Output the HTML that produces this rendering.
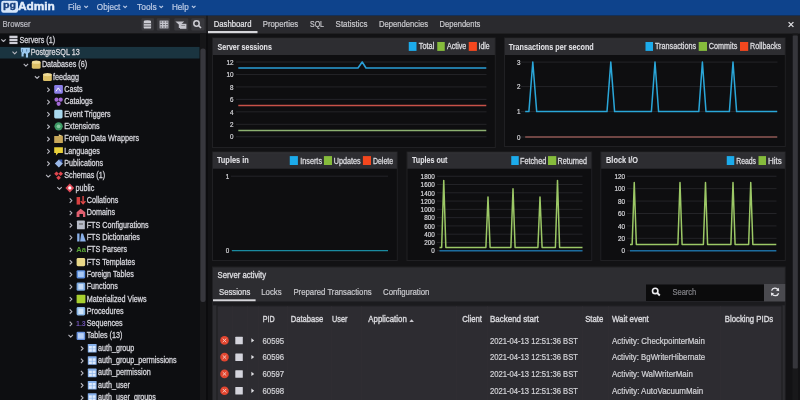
<!DOCTYPE html><html><head><meta charset="utf-8"><style>html,body{margin:0;padding:0;background:#131315;width:800px;height:400px;overflow:hidden}svg{display:block;will-change:transform}text{font-family:"Liberation Sans",sans-serif}</style></head><body>
<svg width="800" height="400" viewBox="0 0 800 400">
<rect x="0.00" y="0.00" width="800.00" height="400.00" fill="#121214" />
<rect x="0.00" y="0.00" width="800.00" height="15.70" fill="#0e438c" />
<rect x="1.2" y="0.7" width="16.8" height="12.1" rx="2.2" fill="#d6e6fa"/>
<text x="3.10" y="8.00" font-size="9.8" fill="#1a4280" font-weight="bold" text-anchor="start" textLength="13.0" lengthAdjust="spacingAndGlyphs" stroke="#1a4280" stroke-width="0.35">pg</text>
<text x="17.90" y="9.70" font-size="10.6" fill="#e4eefb" font-weight="bold" text-anchor="start" textLength="37.0" lengthAdjust="spacingAndGlyphs" stroke="#e4eefb" stroke-width="0.45">Admin</text>
<text x="67.90" y="9.70" font-size="8.6" fill="#bccbe6" font-weight="normal" text-anchor="start" textLength="13.1" lengthAdjust="spacingAndGlyphs" stroke="#bccbe6" stroke-width="0.22">File</text>
<polyline points="84.30,5.90 86.10,7.70 87.90,5.90" fill="none" stroke="#bccbe6" stroke-width="1.2" stroke-linejoin="round" />
<text x="96.80" y="9.70" font-size="8.6" fill="#bccbe6" font-weight="normal" text-anchor="start" textLength="23.6" lengthAdjust="spacingAndGlyphs" stroke="#bccbe6" stroke-width="0.22">Object</text>
<polyline points="123.30,5.90 125.10,7.70 126.90,5.90" fill="none" stroke="#bccbe6" stroke-width="1.2" stroke-linejoin="round" />
<text x="137.00" y="9.70" font-size="8.6" fill="#bccbe6" font-weight="normal" text-anchor="start" textLength="19.7" lengthAdjust="spacingAndGlyphs" stroke="#bccbe6" stroke-width="0.22">Tools</text>
<polyline points="159.40,5.90 161.20,7.70 163.00,5.90" fill="none" stroke="#bccbe6" stroke-width="1.2" stroke-linejoin="round" />
<text x="172.00" y="9.70" font-size="8.6" fill="#bccbe6" font-weight="normal" text-anchor="start" textLength="16.7" lengthAdjust="spacingAndGlyphs" stroke="#bccbe6" stroke-width="0.22">Help</text>
<polyline points="191.90,5.90 193.70,7.70 195.50,5.90" fill="none" stroke="#bccbe6" stroke-width="1.2" stroke-linejoin="round" />
<rect x="0.00" y="15.70" width="206.00" height="17.90" fill="#2a2a2e" />
<rect x="208.00" y="15.70" width="592.00" height="17.90" fill="#2a2a2e" />
<rect x="206.00" y="15.70" width="2.00" height="17.90" fill="#1c1c1f" />
<text x="2.50" y="26.80" font-size="8.3" fill="#b9b9c0" font-weight="normal" text-anchor="start" textLength="28.1" lengthAdjust="spacingAndGlyphs" stroke="#b9b9c0" stroke-width="0.22">Browser</text>
<rect x="141.5" y="18.3" width="12.5" height="12.1" rx="1" fill="#38383d"/>
<rect x="156.8" y="18.3" width="13.1" height="12.1" rx="1" fill="#38383d"/>
<rect x="174.3" y="18.3" width="14" height="12.1" rx="1" fill="#38383d"/>
<rect x="191.3" y="18.3" width="13.2" height="12.1" rx="1" fill="#38383d"/>
<g fill="#cdcdd4"><ellipse cx="147.4" cy="21.6" rx="3.7" ry="1.3"/><rect x="143.7" y="21.6" width="7.4" height="7" rx="1.2"/></g><g stroke="#3a3a3f" stroke-width="0.7"><line x1="143.7" y1="23.6" x2="151.1" y2="23.6"/><line x1="143.7" y1="26.1" x2="151.1" y2="26.1"/></g>
<rect x="159.6" y="20.6" width="8.8" height="7.8" fill="#c4c4cc"/><g fill="#2a2a2e"><rect x="160.6" y="21.5" width="1.1" height="1.1"/><rect x="160.6" y="24.0" width="1.1" height="1.1"/><rect x="160.6" y="26.5" width="1.1" height="1.1"/><rect x="163.5" y="21.5" width="1.1" height="1.1"/><rect x="163.5" y="24.0" width="1.1" height="1.1"/><rect x="163.5" y="26.5" width="1.1" height="1.1"/><rect x="166.4" y="21.5" width="1.1" height="1.1"/><rect x="166.4" y="24.0" width="1.1" height="1.1"/><rect x="166.4" y="26.5" width="1.1" height="1.1"/></g>
<g fill="#c4c4cc"><polygon points="175.4,21.6 184.2,21.6 181,24.6 181,28 178.8,28 178.8,24.6"/><rect x="180" y="23.8" width="6.4" height="5" /></g><rect x="181.3" y="25" width="3.8" height="1" fill="#8a8a90"/>
<circle cx="196.5" cy="23.5" r="2.7" fill="none" stroke="#cdcdd4" stroke-width="1.5"/><line x1="198.5" y1="25.5" x2="201" y2="28" stroke="#cdcdd4" stroke-width="1.6"/>
<text x="213.75" y="27.20" font-size="8.4" fill="#e4e4e8" font-weight="normal" text-anchor="start" textLength="37.7" lengthAdjust="spacingAndGlyphs" stroke="#e4e4e8" stroke-width="0.22">Dashboard</text>
<text x="262.75" y="27.20" font-size="8.4" fill="#c8c8cc" font-weight="normal" text-anchor="start" textLength="35.4" lengthAdjust="spacingAndGlyphs" stroke="#c8c8cc" stroke-width="0.22">Properties</text>
<text x="310.00" y="27.20" font-size="8.4" fill="#c8c8cc" font-weight="normal" text-anchor="start" textLength="14.0" lengthAdjust="spacingAndGlyphs" stroke="#c8c8cc" stroke-width="0.22">SQL</text>
<text x="335.60" y="27.20" font-size="8.4" fill="#c8c8cc" font-weight="normal" text-anchor="start" textLength="31.8" lengthAdjust="spacingAndGlyphs" stroke="#c8c8cc" stroke-width="0.22">Statistics</text>
<text x="379.00" y="27.20" font-size="8.4" fill="#c8c8cc" font-weight="normal" text-anchor="start" textLength="49.0" lengthAdjust="spacingAndGlyphs" stroke="#c8c8cc" stroke-width="0.22">Dependencies</text>
<text x="439.60" y="27.20" font-size="8.4" fill="#c8c8cc" font-weight="normal" text-anchor="start" textLength="40.8" lengthAdjust="spacingAndGlyphs" stroke="#c8c8cc" stroke-width="0.22">Dependents</text>
<rect x="208.00" y="31.00" width="49.50" height="2.20" fill="#d6d6da" />
<g stroke="#e0e0e4" stroke-width="1.3"><line x1="788.6" y1="22.1" x2="793.4" y2="26.9"/><line x1="793.4" y1="22.1" x2="788.6" y2="26.9"/></g>
<rect x="0.00" y="33.60" width="206.00" height="366.40" fill="#0d0e11" />
<rect x="200.00" y="33.60" width="6.00" height="366.40" fill="#161618" />
<rect x="200.40" y="48.50" width="5.20" height="253.50" fill="#37373d" rx="2.2"/>
<rect x="206.00" y="33.60" width="2.00" height="366.40" fill="#0c0c0e" />
<rect x="0.00" y="46.92" width="199.50" height="11.60" fill="#1a3440" />
<polyline points="1.30,39.30 3.50,41.50 5.70,39.30" fill="none" stroke="#b8b8c0" stroke-width="1.1" stroke-linejoin="round" />
<g transform="translate(13.75,39.90) scale(1.16) translate(-13.75,-39.90)">
<g fill="#cfcfd8"><rect x="10.0" y="36.3" width="7" height="2" /><rect x="10.0" y="38.9" width="7" height="2"/><rect x="10.0" y="41.5" width="7" height="2"/></g>
</g>
<text x="19.50" y="42.80" font-size="9.0" fill="#d6d6dc" font-weight="normal" text-anchor="start" textLength="35.6" lengthAdjust="spacingAndGlyphs" stroke="#d6d6dc" stroke-width="0.3">Servers (1)</text>
<polyline points="12.50,51.62 14.70,53.82 16.90,51.62" fill="none" stroke="#b8b8c0" stroke-width="1.1" stroke-linejoin="round" />
<g transform="translate(24.95,52.22) scale(1.16) translate(-24.95,-52.22)">
<path d="M21.4,48.419999999999995 h7.8 v3.6 l-1.6,1.2 v3.6 h-1.8 v-3 l-1,-1 l-1,1 v2 h-1.8 v-3.4 l-0.6,-1 z" fill="#9ccaf0"/><path d="M22.8,49.519999999999996 v2.6 M26.4,49.519999999999996 v2.2" stroke="#3a6a90" stroke-width="0.6"/>
</g>
<text x="30.70" y="55.12" font-size="9.0" fill="#d6d6dc" font-weight="normal" text-anchor="start" textLength="49.0" lengthAdjust="spacingAndGlyphs" stroke="#d6d6dc" stroke-width="0.3">PostgreSQL 13</text>
<polyline points="23.70,63.94 25.90,66.14 28.10,63.94" fill="none" stroke="#b8b8c0" stroke-width="1.1" stroke-linejoin="round" />
<g transform="translate(36.15,64.54) scale(1.16) translate(-36.15,-64.54)">
<rect x="32.4" y="62.14000000000001" width="7.6" height="6" rx="1.2" fill="#dcc068"/><ellipse cx="36.199999999999996" cy="62.540000000000006" rx="3.8" ry="1.4" fill="#f0dc98"/>
</g>
<text x="41.90" y="67.44" font-size="9.0" fill="#d6d6dc" font-weight="normal" text-anchor="start" textLength="45.2" lengthAdjust="spacingAndGlyphs" stroke="#d6d6dc" stroke-width="0.3">Databases (6)</text>
<polyline points="34.90,76.26 37.10,78.46 39.30,76.26" fill="none" stroke="#b8b8c0" stroke-width="1.1" stroke-linejoin="round" />
<g transform="translate(47.35,76.86) scale(1.16) translate(-47.35,-76.86)">
<rect x="43.599999999999994" y="74.46000000000002" width="7.6" height="6" rx="1.2" fill="#dcc068"/><ellipse cx="47.39999999999999" cy="74.86000000000001" rx="3.8" ry="1.4" fill="#f0dc98"/>
</g>
<text x="53.10" y="79.76" font-size="9.0" fill="#d6d6dc" font-weight="normal" text-anchor="start" textLength="26.0" lengthAdjust="spacingAndGlyphs" stroke="#d6d6dc" stroke-width="0.3">feedagg</text>
<polyline points="47.30,87.58 49.50,89.78 47.30,91.98" fill="none" stroke="#b8b8c0" stroke-width="1.1" stroke-linejoin="round" />
<g transform="translate(58.55,89.18) scale(1.16) translate(-58.55,-89.18)">
<rect x="54.8" y="85.58000000000001" width="7.5" height="7.5" rx="1" fill="#8a7ee8"/><path d="M56.3,91.08000000000001 l2,-3 l2,3" stroke="#fff" stroke-width="0.8" fill="none"/>
</g>
<text x="64.30" y="92.08" font-size="9.0" fill="#d6d6dc" font-weight="normal" text-anchor="start" textLength="18.4" lengthAdjust="spacingAndGlyphs" stroke="#d6d6dc" stroke-width="0.3">Casts</text>
<polyline points="47.30,99.90 49.50,102.10 47.30,104.30" fill="none" stroke="#b8b8c0" stroke-width="1.1" stroke-linejoin="round" />
<g transform="translate(58.55,101.50) scale(1.16) translate(-58.55,-101.50)">
<g fill="#a46ad8"><circle cx="56.8" cy="99.9" r="1.8"/><circle cx="60.4" cy="99.9" r="1.8"/><circle cx="58.599999999999994" cy="103.5" r="1.8"/></g>
</g>
<text x="64.30" y="104.40" font-size="9.0" fill="#d6d6dc" font-weight="normal" text-anchor="start" textLength="28.4" lengthAdjust="spacingAndGlyphs" stroke="#d6d6dc" stroke-width="0.3">Catalogs</text>
<polyline points="47.30,112.22 49.50,114.42 47.30,116.62" fill="none" stroke="#b8b8c0" stroke-width="1.1" stroke-linejoin="round" />
<g transform="translate(58.55,113.82) scale(1.16) translate(-58.55,-113.82)">
<rect x="54.8" y="110.22000000000001" width="7.2" height="7.6" rx="1.2" fill="#a8d8ee"/>
</g>
<text x="64.30" y="116.72" font-size="9.0" fill="#d6d6dc" font-weight="normal" text-anchor="start" textLength="46.4" lengthAdjust="spacingAndGlyphs" stroke="#d6d6dc" stroke-width="0.3">Event Triggers</text>
<polyline points="47.30,124.54 49.50,126.74 47.30,128.94" fill="none" stroke="#b8b8c0" stroke-width="1.1" stroke-linejoin="round" />
<g transform="translate(58.55,126.14) scale(1.16) translate(-58.55,-126.14)">
<circle cx="58.599999999999994" cy="126.34000000000002" r="3.6" fill="#3e9a66"/><circle cx="58.599999999999994" cy="126.34000000000002" r="1.6" fill="#86c8a0"/>
</g>
<text x="64.30" y="129.04" font-size="9.0" fill="#d6d6dc" font-weight="normal" text-anchor="start" textLength="35.2" lengthAdjust="spacingAndGlyphs" stroke="#d6d6dc" stroke-width="0.3">Extensions</text>
<polyline points="47.30,136.86 49.50,139.06 47.30,141.26" fill="none" stroke="#b8b8c0" stroke-width="1.1" stroke-linejoin="round" />
<g transform="translate(58.55,138.46) scale(1.16) translate(-58.55,-138.46)">
<path d="M54.8,136.36 h7.5 v6 h-7.5 z" fill="#c8a85a"/><path d="M58.8,134.86 l3.5,1.5 h-3.5 z" fill="#e8d08a"/>
</g>
<text x="64.30" y="141.36" font-size="9.0" fill="#d6d6dc" font-weight="normal" text-anchor="start" textLength="74.7" lengthAdjust="spacingAndGlyphs" stroke="#d6d6dc" stroke-width="0.3">Foreign Data Wrappers</text>
<polyline points="47.30,149.18 49.50,151.38 47.30,153.58" fill="none" stroke="#b8b8c0" stroke-width="1.1" stroke-linejoin="round" />
<g transform="translate(58.55,150.78) scale(1.16) translate(-58.55,-150.78)">
<path d="M54.8,147.78 h7.5 v5 h-4 l-2,2 v-2 h-1.5 z" fill="#e8d03a"/>
</g>
<text x="64.30" y="153.68" font-size="9.0" fill="#d6d6dc" font-weight="normal" text-anchor="start" textLength="35.6" lengthAdjust="spacingAndGlyphs" stroke="#d6d6dc" stroke-width="0.3">Languages</text>
<polyline points="47.30,161.50 49.50,163.70 47.30,165.90" fill="none" stroke="#b8b8c0" stroke-width="1.1" stroke-linejoin="round" />
<g transform="translate(58.55,163.10) scale(1.16) translate(-58.55,-163.10)">
<path d="M55.3,163.5 l3.5,-3.5 l3.5,3.5 l-3.5,3.5 z" fill="#9ab8e8"/><path d="M58.8,160.0 l3,0 l0,3 z" fill="#3a5ab0"/>
</g>
<text x="64.30" y="166.00" font-size="9.0" fill="#d6d6dc" font-weight="normal" text-anchor="start" textLength="38.8" lengthAdjust="spacingAndGlyphs" stroke="#d6d6dc" stroke-width="0.3">Publications</text>
<polyline points="46.10,174.82 48.30,177.02 50.50,174.82" fill="none" stroke="#b8b8c0" stroke-width="1.1" stroke-linejoin="round" />
<g transform="translate(58.55,175.42) scale(1.16) translate(-58.55,-175.42)">
<g fill="#e0464e"><path d="M56.8,172.02 l2,2 l-2,2 l-2,-2 z"/><path d="M60.4,172.02 l2,2 l-2,2 l-2,-2 z"/><path d="M58.599999999999994,175.42000000000002 l2,2 l-2,2 l-2,-2 z"/></g>
</g>
<text x="64.30" y="178.32" font-size="9.0" fill="#d6d6dc" font-weight="normal" text-anchor="start" textLength="40.8" lengthAdjust="spacingAndGlyphs" stroke="#d6d6dc" stroke-width="0.3">Schemas (1)</text>
<polyline points="57.30,187.14 59.50,189.34 61.70,187.14" fill="none" stroke="#b8b8c0" stroke-width="1.1" stroke-linejoin="round" />
<g transform="translate(69.75,187.74) scale(1.16) translate(-69.75,-187.74)">
<path d="M69.8,184.14000000000001 l3.8,3.8 l-3.8,3.8 l-3.8,-3.8 z" fill="#e04a58"/><circle cx="69.8" cy="187.94000000000003" r="1.4" fill="#fff"/>
</g>
<text x="75.50" y="190.64" font-size="9.0" fill="#d6d6dc" font-weight="normal" text-anchor="start" textLength="18.8" lengthAdjust="spacingAndGlyphs" stroke="#d6d6dc" stroke-width="0.3">public</text>
<polyline points="69.70,198.46 71.90,200.66 69.70,202.86" fill="none" stroke="#b8b8c0" stroke-width="1.1" stroke-linejoin="round" />
<g transform="translate(80.95,200.06) scale(1.16) translate(-80.95,-200.06)">
<rect x="77.19999999999999" y="197.46" width="3" height="6.5" fill="#d84040"/><path d="M82.79999999999998,196.46 v6.5 m-2,-2 l2,2.2 l2,-2.2" stroke="#e04848" stroke-width="1.2" fill="none"/>
</g>
<text x="86.70" y="202.96" font-size="9.0" fill="#d6d6dc" font-weight="normal" text-anchor="start" textLength="31.6" lengthAdjust="spacingAndGlyphs" stroke="#d6d6dc" stroke-width="0.3">Collations</text>
<polyline points="69.70,210.78 71.90,212.98 69.70,215.18" fill="none" stroke="#b8b8c0" stroke-width="1.1" stroke-linejoin="round" />
<g transform="translate(80.95,212.38) scale(1.16) translate(-80.95,-212.38)">
<path d="M77.19999999999999,216.28000000000003 v-4 l3.5,-3 l4,3 v4 h-2 v-2.5 h-3 v2.5 z" fill="#e06070"/>
</g>
<text x="86.70" y="215.28" font-size="9.0" fill="#d6d6dc" font-weight="normal" text-anchor="start" textLength="28.4" lengthAdjust="spacingAndGlyphs" stroke="#d6d6dc" stroke-width="0.3">Domains</text>
<polyline points="69.70,223.10 71.90,225.30 69.70,227.50" fill="none" stroke="#b8b8c0" stroke-width="1.1" stroke-linejoin="round" />
<g transform="translate(80.95,224.70) scale(1.16) translate(-80.95,-224.70)">
<rect x="77.49999999999999" y="221.10000000000002" width="6.8" height="7.6" rx="0.6" fill="#b8bcc8"/><rect x="79.19999999999999" y="223.60000000000002" width="3.5" height="1" fill="#666"/>
</g>
<text x="86.70" y="227.60" font-size="9.0" fill="#d6d6dc" font-weight="normal" text-anchor="start" textLength="62.0" lengthAdjust="spacingAndGlyphs" stroke="#d6d6dc" stroke-width="0.3">FTS Configurations</text>
<polyline points="69.70,235.42 71.90,237.62 69.70,239.82" fill="none" stroke="#b8b8c0" stroke-width="1.1" stroke-linejoin="round" />
<g transform="translate(80.95,237.02) scale(1.16) translate(-80.95,-237.02)">
<path d="M77.69999999999999,240.92000000000002 v-7 h2 v7 z M80.19999999999999,240.92000000000002 l1,-7 h1.5 l2.5,7 h-2 z" fill="#8ab0e8"/>
</g>
<text x="86.70" y="239.92" font-size="9.0" fill="#d6d6dc" font-weight="normal" text-anchor="start" textLength="53.2" lengthAdjust="spacingAndGlyphs" stroke="#d6d6dc" stroke-width="0.3">FTS Dictionaries</text>
<polyline points="69.70,247.74 71.90,249.94 69.70,252.14" fill="none" stroke="#b8b8c0" stroke-width="1.1" stroke-linejoin="round" />
<g transform="translate(80.95,249.34) scale(1.16) translate(-80.95,-249.34)">
<text x="76.90" y="251.94" font-size="6.5" fill="#5aa838" font-weight="bold" text-anchor="start">Aa</text>
</g>
<text x="86.70" y="252.24" font-size="9.0" fill="#d6d6dc" font-weight="normal" text-anchor="start" textLength="40.4" lengthAdjust="spacingAndGlyphs" stroke="#d6d6dc" stroke-width="0.3">FTS Parsers</text>
<polyline points="69.70,260.06 71.90,262.26 69.70,264.46" fill="none" stroke="#b8b8c0" stroke-width="1.1" stroke-linejoin="round" />
<g transform="translate(80.95,261.66) scale(1.16) translate(-80.95,-261.66)">
<rect x="77.19999999999999" y="258.55999999999995" width="7.4" height="7" rx="1.2" fill="#e8d888"/>
</g>
<text x="86.70" y="264.56" font-size="9.0" fill="#d6d6dc" font-weight="normal" text-anchor="start" textLength="48.3" lengthAdjust="spacingAndGlyphs" stroke="#d6d6dc" stroke-width="0.3">FTS Templates</text>
<polyline points="69.70,272.38 71.90,274.58 69.70,276.78" fill="none" stroke="#b8b8c0" stroke-width="1.1" stroke-linejoin="round" />
<g transform="translate(80.95,273.98) scale(1.16) translate(-80.95,-273.98)">
<rect x="77.19999999999999" y="270.68" width="7.4" height="7.2" rx="1" fill="#5a8ee0"/><rect x="78.39999999999999" y="271.88" width="5" height="4.8" fill="#a8c8f4"/>
</g>
<text x="86.70" y="276.88" font-size="9.0" fill="#d6d6dc" font-weight="normal" text-anchor="start" textLength="47.1" lengthAdjust="spacingAndGlyphs" stroke="#d6d6dc" stroke-width="0.3">Foreign Tables</text>
<polyline points="69.70,284.70 71.90,286.90 69.70,289.10" fill="none" stroke="#b8b8c0" stroke-width="1.1" stroke-linejoin="round" />
<g transform="translate(80.95,286.30) scale(1.16) translate(-80.95,-286.30)">
<rect x="77.19999999999999" y="282.99999999999994" width="7.4" height="7.2" rx="1.2" fill="#7aa8e0"/><rect x="78.69999999999999" y="284.19999999999993" width="4.4" height="4.8" fill="#c8dcf4"/>
</g>
<text x="86.70" y="289.20" font-size="9.0" fill="#d6d6dc" font-weight="normal" text-anchor="start" textLength="31.2" lengthAdjust="spacingAndGlyphs" stroke="#d6d6dc" stroke-width="0.3">Functions</text>
<polyline points="69.70,297.02 71.90,299.22 69.70,301.42" fill="none" stroke="#b8b8c0" stroke-width="1.1" stroke-linejoin="round" />
<g transform="translate(80.95,298.62) scale(1.16) translate(-80.95,-298.62)">
<rect x="77.19999999999999" y="295.32" width="7.6" height="7.2" rx="0.6" fill="#a8d030"/>
</g>
<text x="86.70" y="301.52" font-size="9.0" fill="#d6d6dc" font-weight="normal" text-anchor="start" textLength="59.9" lengthAdjust="spacingAndGlyphs" stroke="#d6d6dc" stroke-width="0.3">Materialized Views</text>
<polyline points="69.70,309.34 71.90,311.54 69.70,313.74" fill="none" stroke="#b8b8c0" stroke-width="1.1" stroke-linejoin="round" />
<g transform="translate(80.95,310.94) scale(1.16) translate(-80.95,-310.94)">
<rect x="77.19999999999999" y="307.64" width="7.4" height="7.2" rx="1.2" fill="#8ab8e8"/><rect x="78.69999999999999" y="308.84" width="4.4" height="4.8" fill="#d0e4f8"/>
</g>
<text x="86.70" y="313.84" font-size="9.0" fill="#d6d6dc" font-weight="normal" text-anchor="start" textLength="36.8" lengthAdjust="spacingAndGlyphs" stroke="#d6d6dc" stroke-width="0.3">Procedures</text>
<polyline points="69.70,321.66 71.90,323.86 69.70,326.06" fill="none" stroke="#b8b8c0" stroke-width="1.1" stroke-linejoin="round" />
<g transform="translate(80.95,323.26) scale(1.16) translate(-80.95,-323.26)">
<text x="76.70" y="325.66" font-size="6" fill="#6e52b0" font-weight="bold" text-anchor="start">1.3</text>
</g>
<text x="86.70" y="326.16" font-size="9.0" fill="#d6d6dc" font-weight="normal" text-anchor="start" textLength="36.0" lengthAdjust="spacingAndGlyphs" stroke="#d6d6dc" stroke-width="0.3">Sequences</text>
<polyline points="68.50,334.98 70.70,337.18 72.90,334.98" fill="none" stroke="#b8b8c0" stroke-width="1.1" stroke-linejoin="round" />
<g transform="translate(80.95,335.58) scale(1.16) translate(-80.95,-335.58)">
<rect x="77.19999999999999" y="332.28" width="7.4" height="7.2" rx="1" fill="#6a94e0"/><rect x="78.39999999999999" y="333.47999999999996" width="5" height="4.8" fill="#b8d0f4"/>
</g>
<text x="86.70" y="338.48" font-size="9.0" fill="#d6d6dc" font-weight="normal" text-anchor="start" textLength="35.6" lengthAdjust="spacingAndGlyphs" stroke="#d6d6dc" stroke-width="0.3">Tables (13)</text>
<polyline points="80.90,346.30 83.10,348.50 80.90,350.70" fill="none" stroke="#b8b8c0" stroke-width="1.1" stroke-linejoin="round" />
<g transform="translate(92.15,347.90) scale(1.16) translate(-92.15,-347.90)">
<rect x="88.39999999999999" y="344.49999999999994" width="7.6" height="7.4" rx="0.5" fill="#86b0ea"/><g fill="#dce9fb"><rect x="89.3" y="346.29999999999995" width="2.6" height="2.2"/><rect x="92.49999999999999" y="346.29999999999995" width="2.6" height="2.2"/><rect x="89.3" y="348.99999999999994" width="2.6" height="2.2"/><rect x="92.49999999999999" y="348.99999999999994" width="2.6" height="2.2"/></g>
</g>
<text x="97.90" y="350.80" font-size="9.0" fill="#d6d6dc" font-weight="normal" text-anchor="start" textLength="36.4" lengthAdjust="spacingAndGlyphs" stroke="#d6d6dc" stroke-width="0.3">auth_group</text>
<polyline points="80.90,358.62 83.10,360.82 80.90,363.02" fill="none" stroke="#b8b8c0" stroke-width="1.1" stroke-linejoin="round" />
<g transform="translate(92.15,360.22) scale(1.16) translate(-92.15,-360.22)">
<rect x="88.39999999999999" y="356.81999999999994" width="7.6" height="7.4" rx="0.5" fill="#86b0ea"/><g fill="#dce9fb"><rect x="89.3" y="358.61999999999995" width="2.6" height="2.2"/><rect x="92.49999999999999" y="358.61999999999995" width="2.6" height="2.2"/><rect x="89.3" y="361.31999999999994" width="2.6" height="2.2"/><rect x="92.49999999999999" y="361.31999999999994" width="2.6" height="2.2"/></g>
</g>
<text x="97.90" y="363.12" font-size="9.0" fill="#d6d6dc" font-weight="normal" text-anchor="start" textLength="78.8" lengthAdjust="spacingAndGlyphs" stroke="#d6d6dc" stroke-width="0.3">auth_group_permissions</text>
<polyline points="80.90,370.94 83.10,373.14 80.90,375.34" fill="none" stroke="#b8b8c0" stroke-width="1.1" stroke-linejoin="round" />
<g transform="translate(92.15,372.54) scale(1.16) translate(-92.15,-372.54)">
<rect x="88.39999999999999" y="369.13999999999993" width="7.6" height="7.4" rx="0.5" fill="#86b0ea"/><g fill="#dce9fb"><rect x="89.3" y="370.93999999999994" width="2.6" height="2.2"/><rect x="92.49999999999999" y="370.93999999999994" width="2.6" height="2.2"/><rect x="89.3" y="373.63999999999993" width="2.6" height="2.2"/><rect x="92.49999999999999" y="373.63999999999993" width="2.6" height="2.2"/></g>
</g>
<text x="97.90" y="375.44" font-size="9.0" fill="#d6d6dc" font-weight="normal" text-anchor="start" textLength="52.8" lengthAdjust="spacingAndGlyphs" stroke="#d6d6dc" stroke-width="0.3">auth_permission</text>
<polyline points="80.90,383.26 83.10,385.46 80.90,387.66" fill="none" stroke="#b8b8c0" stroke-width="1.1" stroke-linejoin="round" />
<g transform="translate(92.15,384.86) scale(1.16) translate(-92.15,-384.86)">
<rect x="88.39999999999999" y="381.46" width="7.6" height="7.4" rx="0.5" fill="#86b0ea"/><g fill="#dce9fb"><rect x="89.3" y="383.26" width="2.6" height="2.2"/><rect x="92.49999999999999" y="383.26" width="2.6" height="2.2"/><rect x="89.3" y="385.96" width="2.6" height="2.2"/><rect x="92.49999999999999" y="385.96" width="2.6" height="2.2"/></g>
</g>
<text x="97.90" y="387.76" font-size="9.0" fill="#d6d6dc" font-weight="normal" text-anchor="start" textLength="32.0" lengthAdjust="spacingAndGlyphs" stroke="#d6d6dc" stroke-width="0.3">auth_user</text>
<polyline points="80.90,395.58 83.10,397.78 80.90,399.98" fill="none" stroke="#b8b8c0" stroke-width="1.1" stroke-linejoin="round" />
<g transform="translate(92.15,397.18) scale(1.16) translate(-92.15,-397.18)">
<rect x="88.39999999999999" y="393.78" width="7.6" height="7.4" rx="0.5" fill="#86b0ea"/><g fill="#dce9fb"><rect x="89.3" y="395.58" width="2.6" height="2.2"/><rect x="92.49999999999999" y="395.58" width="2.6" height="2.2"/><rect x="89.3" y="398.28" width="2.6" height="2.2"/><rect x="92.49999999999999" y="398.28" width="2.6" height="2.2"/></g>
</g>
<text x="97.90" y="400.08" font-size="9.0" fill="#d6d6dc" font-weight="normal" text-anchor="start" textLength="58.0" lengthAdjust="spacingAndGlyphs" stroke="#d6d6dc" stroke-width="0.3">auth_user_groups</text>
<rect x="792.50" y="33.60" width="5.50" height="366.40" fill="#18181a" />
<rect x="792.80" y="35.50" width="5.00" height="333.00" fill="#36363b" rx="1"/>
<rect x="212.00" y="37.50" width="283.80" height="110.50" fill="#202023" />
<rect x="213.00" y="38.50" width="281.80" height="16.50" fill="#2d2d31" />
<rect x="213.00" y="38.50" width="281.80" height="0.80" fill="#353539" />
<rect x="213.00" y="55.00" width="281.80" height="92.00" fill="#0e0e10" />
<text x="217.50" y="49.50" font-size="8.8" fill="#e2e2e6" font-weight="bold" text-anchor="start" textLength="54.4" lengthAdjust="spacingAndGlyphs" stroke="#e2e2e6" stroke-width="0.05">Server sessions</text>
<rect x="408.75" y="42.00" width="7.75" height="8.90" fill="#1cabeb" />
<text x="418.75" y="49.40" font-size="8.2" fill="#dadade" font-weight="normal" text-anchor="start" textLength="15.6" lengthAdjust="spacingAndGlyphs" stroke="#dadade" stroke-width="0.3">Total</text>
<rect x="437.25" y="42.00" width="7.50" height="8.90" fill="#86bc3c" />
<text x="446.90" y="49.40" font-size="8.2" fill="#dadade" font-weight="normal" text-anchor="start" textLength="19.4" lengthAdjust="spacingAndGlyphs" stroke="#dadade" stroke-width="0.3">Active</text>
<rect x="468.75" y="42.00" width="8.15" height="8.90" fill="#f4471e" />
<text x="478.50" y="49.40" font-size="8.2" fill="#dadade" font-weight="normal" text-anchor="start" textLength="11.2" lengthAdjust="spacingAndGlyphs" stroke="#dadade" stroke-width="0.3">Idle</text>
<line x1="236.00" y1="62.00" x2="486.50" y2="62.00" stroke="#242428" stroke-width="1" />
<text x="233.50" y="64.70" font-size="7.6" fill="#d8d8dc" font-weight="normal" text-anchor="end" textLength="7.1" lengthAdjust="spacingAndGlyphs" stroke="#d8d8dc" stroke-width="0.22">12</text>
<line x1="236.00" y1="74.46" x2="486.50" y2="74.46" stroke="#242428" stroke-width="1" />
<text x="233.50" y="77.16" font-size="7.6" fill="#d8d8dc" font-weight="normal" text-anchor="end" textLength="7.1" lengthAdjust="spacingAndGlyphs" stroke="#d8d8dc" stroke-width="0.22">10</text>
<line x1="236.00" y1="86.92" x2="486.50" y2="86.92" stroke="#242428" stroke-width="1" />
<text x="233.50" y="89.62" font-size="7.6" fill="#d8d8dc" font-weight="normal" text-anchor="end" textLength="3.5" lengthAdjust="spacingAndGlyphs" stroke="#d8d8dc" stroke-width="0.22">8</text>
<line x1="236.00" y1="99.38" x2="486.50" y2="99.38" stroke="#242428" stroke-width="1" />
<text x="233.50" y="102.08" font-size="7.6" fill="#d8d8dc" font-weight="normal" text-anchor="end" textLength="3.5" lengthAdjust="spacingAndGlyphs" stroke="#d8d8dc" stroke-width="0.22">6</text>
<line x1="236.00" y1="111.83" x2="486.50" y2="111.83" stroke="#242428" stroke-width="1" />
<text x="233.50" y="114.53" font-size="7.6" fill="#d8d8dc" font-weight="normal" text-anchor="end" textLength="3.5" lengthAdjust="spacingAndGlyphs" stroke="#d8d8dc" stroke-width="0.22">4</text>
<line x1="236.00" y1="124.29" x2="486.50" y2="124.29" stroke="#242428" stroke-width="1" />
<text x="233.50" y="126.99" font-size="7.6" fill="#d8d8dc" font-weight="normal" text-anchor="end" textLength="3.5" lengthAdjust="spacingAndGlyphs" stroke="#d8d8dc" stroke-width="0.22">2</text>
<line x1="236.00" y1="136.75" x2="486.50" y2="136.75" stroke="#242428" stroke-width="1" />
<text x="233.50" y="139.45" font-size="7.6" fill="#d8d8dc" font-weight="normal" text-anchor="end" textLength="3.5" lengthAdjust="spacingAndGlyphs" stroke="#d8d8dc" stroke-width="0.22">0</text>
<polyline points="238.30,130.50 486.30,130.50" fill="none" stroke="#8cb070" stroke-width="1.5" stroke-linejoin="round" />
<polyline points="238.30,105.50 486.30,105.50" fill="none" stroke="#c85248" stroke-width="1.5" stroke-linejoin="round" />
<polyline points="238.30,68.00 358.00,68.00 362.20,62.00 366.00,68.00 486.30,68.00" fill="none" stroke="#2a9ed6" stroke-width="1.6" stroke-linejoin="round" />
<rect x="504.00" y="37.50" width="281.80" height="109.50" fill="#202023" />
<rect x="505.00" y="38.50" width="279.80" height="16.50" fill="#2d2d31" />
<rect x="505.00" y="38.50" width="279.80" height="0.80" fill="#353539" />
<rect x="505.00" y="55.00" width="279.80" height="91.00" fill="#0e0e10" />
<text x="508.75" y="49.50" font-size="8.8" fill="#e2e2e6" font-weight="bold" text-anchor="start" textLength="85.0" lengthAdjust="spacingAndGlyphs" stroke="#e2e2e6" stroke-width="0.05">Transactions per second</text>
<rect x="645.50" y="42.00" width="7.50" height="8.90" fill="#1cabeb" />
<text x="654.90" y="49.40" font-size="8.2" fill="#dadade" font-weight="normal" text-anchor="start" textLength="41.2" lengthAdjust="spacingAndGlyphs" stroke="#dadade" stroke-width="0.3">Transactions</text>
<rect x="698.70" y="42.00" width="8.30" height="8.90" fill="#86bc3c" />
<text x="708.80" y="49.40" font-size="8.2" fill="#dadade" font-weight="normal" text-anchor="start" textLength="28.5" lengthAdjust="spacingAndGlyphs" stroke="#dadade" stroke-width="0.3">Commits</text>
<rect x="740.00" y="42.00" width="8.20" height="8.90" fill="#f4471e" />
<text x="750.10" y="49.40" font-size="8.2" fill="#dadade" font-weight="normal" text-anchor="start" textLength="31.1" lengthAdjust="spacingAndGlyphs" stroke="#dadade" stroke-width="0.3">Rollbacks</text>
<line x1="521.00" y1="62.10" x2="777.50" y2="62.10" stroke="#242428" stroke-width="1" />
<text x="520.50" y="64.80" font-size="7.6" fill="#d8d8dc" font-weight="normal" text-anchor="end" textLength="3.5" lengthAdjust="spacingAndGlyphs" stroke="#d8d8dc" stroke-width="0.22">3</text>
<line x1="521.00" y1="86.60" x2="777.50" y2="86.60" stroke="#242428" stroke-width="1" />
<text x="520.50" y="89.30" font-size="7.6" fill="#d8d8dc" font-weight="normal" text-anchor="end" textLength="3.5" lengthAdjust="spacingAndGlyphs" stroke="#d8d8dc" stroke-width="0.22">2</text>
<line x1="521.00" y1="111.60" x2="777.50" y2="111.60" stroke="#242428" stroke-width="1" />
<text x="520.50" y="114.30" font-size="7.6" fill="#d8d8dc" font-weight="normal" text-anchor="end" textLength="3.5" lengthAdjust="spacingAndGlyphs" stroke="#d8d8dc" stroke-width="0.22">1</text>
<line x1="521.00" y1="137.00" x2="777.50" y2="137.00" stroke="#242428" stroke-width="1" />
<text x="520.50" y="139.70" font-size="7.6" fill="#d8d8dc" font-weight="normal" text-anchor="end" textLength="3.5" lengthAdjust="spacingAndGlyphs" stroke="#d8d8dc" stroke-width="0.22">0</text>
<polyline points="525.20,137.00 777.20,137.00" fill="none" stroke="#8c5450" stroke-width="1.3" stroke-linejoin="round" />
<polyline points="525.20,111.60 528.90,111.60 532.80,62.10 536.70,111.60 607.00,111.60 610.80,62.10 614.60,111.60 651.40,111.60 655.00,62.10 658.60,111.60 698.80,111.60 702.40,62.10 706.00,111.60 729.40,111.60 733.00,62.10 736.60,111.60 777.20,111.60" fill="none" stroke="#2aa6d8" stroke-width="1.5" stroke-linejoin="round" />
<rect x="212.00" y="151.50" width="185.80" height="109.50" fill="#202023" />
<rect x="213.00" y="152.50" width="183.80" height="16.30" fill="#2d2d31" />
<rect x="213.00" y="152.50" width="183.80" height="0.80" fill="#353539" />
<rect x="213.00" y="168.80" width="183.80" height="91.20" fill="#0e0e10" />
<text x="216.90" y="163.20" font-size="8.8" fill="#e2e2e6" font-weight="bold" text-anchor="start" textLength="31.9" lengthAdjust="spacingAndGlyphs" stroke="#e2e2e6" stroke-width="0.05">Tuples in</text>
<rect x="289.75" y="156.10" width="8.15" height="8.90" fill="#1cabeb" />
<text x="300.30" y="163.50" font-size="8.2" fill="#dadade" font-weight="normal" text-anchor="start" textLength="21.7" lengthAdjust="spacingAndGlyphs" stroke="#dadade" stroke-width="0.3">Inserts</text>
<rect x="323.90" y="156.10" width="8.10" height="8.90" fill="#86bc3c" />
<text x="333.70" y="163.50" font-size="8.2" fill="#dadade" font-weight="normal" text-anchor="start" textLength="26.8" lengthAdjust="spacingAndGlyphs" stroke="#dadade" stroke-width="0.3">Updates</text>
<rect x="362.90" y="156.10" width="8.10" height="8.90" fill="#f4471e" />
<text x="373.00" y="163.50" font-size="8.2" fill="#dadade" font-weight="normal" text-anchor="start" textLength="20.0" lengthAdjust="spacingAndGlyphs" stroke="#dadade" stroke-width="0.3">Delete</text>
<line x1="231.00" y1="176.20" x2="388.00" y2="176.20" stroke="#242428" stroke-width="1" />
<text x="229.30" y="178.90" font-size="7.6" fill="#d8d8dc" font-weight="normal" text-anchor="end" textLength="3.5" lengthAdjust="spacingAndGlyphs" stroke="#d8d8dc" stroke-width="0.22">1</text>
<line x1="231.00" y1="250.60" x2="388.00" y2="250.60" stroke="#242428" stroke-width="1" />
<text x="229.30" y="253.30" font-size="7.6" fill="#d8d8dc" font-weight="normal" text-anchor="end" textLength="3.5" lengthAdjust="spacingAndGlyphs" stroke="#d8d8dc" stroke-width="0.22">0</text>
<polyline points="232.00,250.60 388.00,250.60" fill="none" stroke="#1a8aa0" stroke-width="1.4" stroke-linejoin="round" />
<rect x="406.50" y="151.50" width="185.70" height="109.50" fill="#202023" />
<rect x="407.50" y="152.50" width="183.70" height="16.30" fill="#2d2d31" />
<rect x="407.50" y="152.50" width="183.70" height="0.80" fill="#353539" />
<rect x="407.50" y="168.80" width="183.70" height="91.20" fill="#0e0e10" />
<text x="412.00" y="163.20" font-size="8.8" fill="#e2e2e6" font-weight="bold" text-anchor="start" textLength="35.5" lengthAdjust="spacingAndGlyphs" stroke="#e2e2e6" stroke-width="0.05">Tuples out</text>
<rect x="511.25" y="156.10" width="7.50" height="8.90" fill="#1cabeb" />
<text x="520.00" y="163.50" font-size="8.2" fill="#dadade" font-weight="normal" text-anchor="start" textLength="26.2" lengthAdjust="spacingAndGlyphs" stroke="#dadade" stroke-width="0.3">Fetched</text>
<rect x="548.00" y="156.10" width="8.25" height="8.90" fill="#86bc3c" />
<text x="557.50" y="163.50" font-size="8.2" fill="#dadade" font-weight="normal" text-anchor="start" textLength="29.5" lengthAdjust="spacingAndGlyphs" stroke="#dadade" stroke-width="0.3">Returned</text>
<line x1="437.00" y1="176.25" x2="582.50" y2="176.25" stroke="#242428" stroke-width="1" />
<text x="434.80" y="178.95" font-size="7.6" fill="#d8d8dc" font-weight="normal" text-anchor="end" textLength="14.2" lengthAdjust="spacingAndGlyphs" stroke="#d8d8dc" stroke-width="0.22">1800</text>
<line x1="437.00" y1="184.53" x2="582.50" y2="184.53" stroke="#242428" stroke-width="1" />
<text x="434.80" y="187.23" font-size="7.6" fill="#d8d8dc" font-weight="normal" text-anchor="end" textLength="14.2" lengthAdjust="spacingAndGlyphs" stroke="#d8d8dc" stroke-width="0.22">1600</text>
<line x1="437.00" y1="192.81" x2="582.50" y2="192.81" stroke="#242428" stroke-width="1" />
<text x="434.80" y="195.51" font-size="7.6" fill="#d8d8dc" font-weight="normal" text-anchor="end" textLength="14.2" lengthAdjust="spacingAndGlyphs" stroke="#d8d8dc" stroke-width="0.22">1400</text>
<line x1="437.00" y1="201.08" x2="582.50" y2="201.08" stroke="#242428" stroke-width="1" />
<text x="434.80" y="203.78" font-size="7.6" fill="#d8d8dc" font-weight="normal" text-anchor="end" textLength="14.2" lengthAdjust="spacingAndGlyphs" stroke="#d8d8dc" stroke-width="0.22">1200</text>
<line x1="437.00" y1="209.36" x2="582.50" y2="209.36" stroke="#242428" stroke-width="1" />
<text x="434.80" y="212.06" font-size="7.6" fill="#d8d8dc" font-weight="normal" text-anchor="end" textLength="14.2" lengthAdjust="spacingAndGlyphs" stroke="#d8d8dc" stroke-width="0.22">1000</text>
<line x1="437.00" y1="217.64" x2="582.50" y2="217.64" stroke="#242428" stroke-width="1" />
<text x="434.80" y="220.34" font-size="7.6" fill="#d8d8dc" font-weight="normal" text-anchor="end" textLength="10.6" lengthAdjust="spacingAndGlyphs" stroke="#d8d8dc" stroke-width="0.22">800</text>
<line x1="437.00" y1="225.92" x2="582.50" y2="225.92" stroke="#242428" stroke-width="1" />
<text x="434.80" y="228.62" font-size="7.6" fill="#d8d8dc" font-weight="normal" text-anchor="end" textLength="10.6" lengthAdjust="spacingAndGlyphs" stroke="#d8d8dc" stroke-width="0.22">600</text>
<line x1="437.00" y1="234.20" x2="582.50" y2="234.20" stroke="#242428" stroke-width="1" />
<text x="434.80" y="236.90" font-size="7.6" fill="#d8d8dc" font-weight="normal" text-anchor="end" textLength="10.6" lengthAdjust="spacingAndGlyphs" stroke="#d8d8dc" stroke-width="0.22">400</text>
<line x1="437.00" y1="242.47" x2="582.50" y2="242.47" stroke="#242428" stroke-width="1" />
<text x="434.80" y="245.17" font-size="7.6" fill="#d8d8dc" font-weight="normal" text-anchor="end" textLength="10.6" lengthAdjust="spacingAndGlyphs" stroke="#d8d8dc" stroke-width="0.22">200</text>
<line x1="437.00" y1="250.75" x2="582.50" y2="250.75" stroke="#242428" stroke-width="1" />
<text x="434.80" y="253.45" font-size="7.6" fill="#d8d8dc" font-weight="normal" text-anchor="end" textLength="3.5" lengthAdjust="spacingAndGlyphs" stroke="#d8d8dc" stroke-width="0.22">0</text>
<polyline points="439.50,250.75 582.50,250.75" fill="none" stroke="#1c6c9e" stroke-width="1.3" stroke-linejoin="round" />
<polyline points="439.50,247.50 441.65,247.50 443.75,180.39 445.85,247.50 485.90,247.50 488.00,196.94 490.10,247.50 510.90,247.50 513.00,188.66 515.10,247.50 537.90,247.50 540.00,196.94 542.10,247.50 555.40,247.50 557.50,180.39 559.60,247.50 582.50,247.50" fill="none" stroke="#9cc866" stroke-width="1.5" stroke-linejoin="round" />
<rect x="600.30" y="151.50" width="185.50" height="109.50" fill="#202023" />
<rect x="601.30" y="152.50" width="183.50" height="16.30" fill="#2d2d31" />
<rect x="601.30" y="152.50" width="183.50" height="0.80" fill="#353539" />
<rect x="601.30" y="168.80" width="183.50" height="91.20" fill="#0e0e10" />
<text x="606.00" y="163.20" font-size="8.8" fill="#e2e2e6" font-weight="bold" text-anchor="start" textLength="32.0" lengthAdjust="spacingAndGlyphs" stroke="#e2e2e6" stroke-width="0.05">Block I/O</text>
<rect x="726.75" y="156.10" width="7.50" height="8.90" fill="#1cabeb" />
<text x="736.25" y="163.50" font-size="8.2" fill="#dadade" font-weight="normal" text-anchor="start" textLength="19.8" lengthAdjust="spacingAndGlyphs" stroke="#dadade" stroke-width="0.3">Reads</text>
<rect x="758.50" y="156.10" width="7.50" height="8.90" fill="#86bc3c" />
<text x="768.00" y="163.50" font-size="8.2" fill="#dadade" font-weight="normal" text-anchor="start" textLength="13.8" lengthAdjust="spacingAndGlyphs" stroke="#dadade" stroke-width="0.3">Hits</text>
<line x1="627.00" y1="176.25" x2="776.50" y2="176.25" stroke="#242428" stroke-width="1" />
<text x="625.00" y="178.95" font-size="7.6" fill="#d8d8dc" font-weight="normal" text-anchor="end" textLength="10.6" lengthAdjust="spacingAndGlyphs" stroke="#d8d8dc" stroke-width="0.22">120</text>
<line x1="627.00" y1="188.67" x2="776.50" y2="188.67" stroke="#242428" stroke-width="1" />
<text x="625.00" y="191.37" font-size="7.6" fill="#d8d8dc" font-weight="normal" text-anchor="end" textLength="10.6" lengthAdjust="spacingAndGlyphs" stroke="#d8d8dc" stroke-width="0.22">100</text>
<line x1="627.00" y1="201.08" x2="776.50" y2="201.08" stroke="#242428" stroke-width="1" />
<text x="625.00" y="203.78" font-size="7.6" fill="#d8d8dc" font-weight="normal" text-anchor="end" textLength="7.1" lengthAdjust="spacingAndGlyphs" stroke="#d8d8dc" stroke-width="0.22">80</text>
<line x1="627.00" y1="213.50" x2="776.50" y2="213.50" stroke="#242428" stroke-width="1" />
<text x="625.00" y="216.20" font-size="7.6" fill="#d8d8dc" font-weight="normal" text-anchor="end" textLength="7.1" lengthAdjust="spacingAndGlyphs" stroke="#d8d8dc" stroke-width="0.22">60</text>
<line x1="627.00" y1="225.92" x2="776.50" y2="225.92" stroke="#242428" stroke-width="1" />
<text x="625.00" y="228.62" font-size="7.6" fill="#d8d8dc" font-weight="normal" text-anchor="end" textLength="7.1" lengthAdjust="spacingAndGlyphs" stroke="#d8d8dc" stroke-width="0.22">40</text>
<line x1="627.00" y1="238.34" x2="776.50" y2="238.34" stroke="#242428" stroke-width="1" />
<text x="625.00" y="241.03" font-size="7.6" fill="#d8d8dc" font-weight="normal" text-anchor="end" textLength="7.1" lengthAdjust="spacingAndGlyphs" stroke="#d8d8dc" stroke-width="0.22">20</text>
<line x1="627.00" y1="250.75" x2="776.50" y2="250.75" stroke="#242428" stroke-width="1" />
<text x="625.00" y="253.45" font-size="7.6" fill="#d8d8dc" font-weight="normal" text-anchor="end" textLength="3.5" lengthAdjust="spacingAndGlyphs" stroke="#d8d8dc" stroke-width="0.22">0</text>
<polyline points="630.00,250.75 776.30,250.75" fill="none" stroke="#1c6c9e" stroke-width="1.3" stroke-linejoin="round" />
<polyline points="630.00,244.50 632.15,244.50 634.25,182.50 636.35,244.50 677.90,244.50 680.00,182.50 682.10,244.50 703.40,244.50 705.50,182.50 707.60,244.50 730.90,244.50 733.00,182.50 735.10,244.50 748.65,244.50 750.75,182.50 752.85,244.50 776.30,244.50" fill="none" stroke="#9cc866" stroke-width="1.5" stroke-linejoin="round" />
<rect x="212.00" y="266.50" width="573.80" height="133.50" fill="#202023" />
<rect x="213.00" y="267.50" width="571.80" height="132.50" fill="#2d2d31" />
<text x="217.50" y="278.30" font-size="8.8" fill="#dcdce0" font-weight="normal" text-anchor="start" textLength="48.5" lengthAdjust="spacingAndGlyphs" stroke="#dcdce0" stroke-width="0.35">Server activity</text>
<text x="219.00" y="295.10" font-size="8.6" fill="#e0e0e4" font-weight="normal" text-anchor="start" textLength="31.3" lengthAdjust="spacingAndGlyphs" stroke="#e0e0e4" stroke-width="0.22">Sessions</text>
<text x="261.25" y="295.10" font-size="8.6" fill="#c8c8cc" font-weight="normal" text-anchor="start" textLength="20.4" lengthAdjust="spacingAndGlyphs" stroke="#c8c8cc" stroke-width="0.22">Locks</text>
<text x="293.40" y="295.10" font-size="8.6" fill="#c8c8cc" font-weight="normal" text-anchor="start" textLength="78.2" lengthAdjust="spacingAndGlyphs" stroke="#c8c8cc" stroke-width="0.22">Prepared Transactions</text>
<text x="383.00" y="295.10" font-size="8.6" fill="#c8c8cc" font-weight="normal" text-anchor="start" textLength="46.4" lengthAdjust="spacingAndGlyphs" stroke="#c8c8cc" stroke-width="0.22">Configuration</text>
<rect x="213.00" y="299.30" width="42.60" height="2.20" fill="#d6d6da" />
<rect x="213.00" y="301.50" width="571.80" height="3.80" fill="#1b1b1e" />
<rect x="646.00" y="284.50" width="118.00" height="16.50" fill="#0b0b0c" />
<circle cx="655.2" cy="290.9" r="2.7" fill="none" stroke="#ececf0" stroke-width="1.6"/><line x1="657.3" y1="293" x2="659.8" y2="295.5" stroke="#ececf0" stroke-width="1.8"/>
<text x="672.50" y="295.20" font-size="8.4" fill="#808086" font-weight="normal" text-anchor="start" textLength="23.8" lengthAdjust="spacingAndGlyphs" stroke="#808086" stroke-width="0.22">Search</text>
<rect x="764.00" y="284.00" width="21.20" height="17.40" fill="#4a4a4f" />
<path d="M771.6,290.6 a3.6,3.6 0 0 1 6.6,-0.6 M778.6,293.2 a3.6,3.6 0 0 1 -6.6,0.6" fill="none" stroke="#e8e8ec" stroke-width="1.3"/><polygon points="778.9,287.8 779.2,291.2 776,290.4" fill="#e8e8ec"/><polygon points="771.2,296 770.9,292.6 774.1,293.4" fill="#e8e8ec"/>
<rect x="216.50" y="305.30" width="566.00" height="94.70" fill="#1c1c1f" />
<rect x="217.50" y="306.30" width="564.00" height="93.70" fill="#2d2c31" />
<text x="262.80" y="322.40" font-size="9.2" fill="#d8d8dc" font-weight="normal" text-anchor="start" textLength="11.9" lengthAdjust="spacingAndGlyphs" stroke="#d8d8dc" stroke-width="0.4">PID</text>
<text x="290.80" y="322.40" font-size="9.2" fill="#d8d8dc" font-weight="normal" text-anchor="start" textLength="32.5" lengthAdjust="spacingAndGlyphs" stroke="#d8d8dc" stroke-width="0.4">Database</text>
<text x="332.10" y="322.40" font-size="9.2" fill="#d8d8dc" font-weight="normal" text-anchor="start" textLength="15.3" lengthAdjust="spacingAndGlyphs" stroke="#d8d8dc" stroke-width="0.4">User</text>
<text x="368.25" y="322.40" font-size="9.2" fill="#d8d8dc" font-weight="normal" text-anchor="start" textLength="38.6" lengthAdjust="spacingAndGlyphs" stroke="#d8d8dc" stroke-width="0.4">Application</text>
<text x="462.20" y="322.40" font-size="9.2" fill="#d8d8dc" font-weight="normal" text-anchor="start" textLength="19.8" lengthAdjust="spacingAndGlyphs" stroke="#d8d8dc" stroke-width="0.4">Client</text>
<text x="490.00" y="322.40" font-size="9.2" fill="#d8d8dc" font-weight="normal" text-anchor="start" textLength="48.8" lengthAdjust="spacingAndGlyphs" stroke="#d8d8dc" stroke-width="0.4">Backend start</text>
<text x="585.20" y="322.40" font-size="9.2" fill="#d8d8dc" font-weight="normal" text-anchor="start" textLength="18.0" lengthAdjust="spacingAndGlyphs" stroke="#d8d8dc" stroke-width="0.4">State</text>
<text x="612.00" y="322.40" font-size="9.2" fill="#d8d8dc" font-weight="normal" text-anchor="start" textLength="36.8" lengthAdjust="spacingAndGlyphs" stroke="#d8d8dc" stroke-width="0.4">Wait event</text>
<text x="724.80" y="322.40" font-size="9.2" fill="#d8d8dc" font-weight="normal" text-anchor="start" textLength="48.4" lengthAdjust="spacingAndGlyphs" stroke="#d8d8dc" stroke-width="0.4">Blocking PIDs</text>
<polygon points="409.3,322 411.6,319.2 413.9,322" fill="#cacacf"/>
<rect x="232.00" y="306.30" width="0.80" height="93.70" fill="#302f34" />
<rect x="247.00" y="306.30" width="0.80" height="93.70" fill="#302f34" />
<rect x="258.00" y="306.30" width="0.80" height="93.70" fill="#302f34" />
<rect x="287.00" y="306.30" width="0.80" height="93.70" fill="#302f34" />
<rect x="331.00" y="306.30" width="0.80" height="93.70" fill="#302f34" />
<rect x="361.00" y="306.30" width="0.80" height="93.70" fill="#302f34" />
<rect x="456.00" y="306.30" width="0.80" height="93.70" fill="#302f34" />
<rect x="487.00" y="306.30" width="0.80" height="93.70" fill="#302f34" />
<rect x="582.00" y="306.30" width="0.80" height="93.70" fill="#302f34" />
<rect x="608.00" y="306.30" width="0.80" height="93.70" fill="#302f34" />
<rect x="720.00" y="306.30" width="0.80" height="93.70" fill="#302f34" />
<circle cx="224.5" cy="340.4" r="4.3" fill="#e2452f"/><g stroke="#f4c8c0" stroke-width="1"><line x1="222.7" y1="338.59999999999997" x2="226.3" y2="342.2"/><line x1="226.3" y1="338.59999999999997" x2="222.7" y2="342.2"/></g>
<rect x="235.30" y="336.70" width="7.50" height="7.50" fill="#d4d4dc" rx="0.5"/>
<polygon points="251.4,338.2 254.2,340.4 251.4,342.59999999999997" fill="#e0e0e4"/>
<text x="262.50" y="343.50" font-size="8.8" fill="#d2d2d6" font-weight="normal" text-anchor="start" textLength="21.6" lengthAdjust="spacingAndGlyphs" stroke="#d2d2d6" stroke-width="0.22">60595</text>
<text x="490.00" y="343.50" font-size="8.8" fill="#d2d2d6" font-weight="normal" text-anchor="start" textLength="88.0" lengthAdjust="spacingAndGlyphs" stroke="#d2d2d6" stroke-width="0.22">2021-04-13 12:51:36 BST</text>
<text x="612.00" y="343.50" font-size="8.8" fill="#d2d2d6" font-weight="normal" text-anchor="start" textLength="92.8" lengthAdjust="spacingAndGlyphs" stroke="#d2d2d6" stroke-width="0.22">Activity: CheckpointerMain</text>
<circle cx="224.5" cy="357.1" r="4.3" fill="#e2452f"/><g stroke="#f4c8c0" stroke-width="1"><line x1="222.7" y1="355.3" x2="226.3" y2="358.90000000000003"/><line x1="226.3" y1="355.3" x2="222.7" y2="358.90000000000003"/></g>
<rect x="235.30" y="353.40" width="7.50" height="7.50" fill="#d4d4dc" rx="0.5"/>
<polygon points="251.4,354.90000000000003 254.2,357.1 251.4,359.3" fill="#e0e0e4"/>
<text x="262.50" y="360.20" font-size="8.8" fill="#d2d2d6" font-weight="normal" text-anchor="start" textLength="21.6" lengthAdjust="spacingAndGlyphs" stroke="#d2d2d6" stroke-width="0.22">60596</text>
<text x="490.00" y="360.20" font-size="8.8" fill="#d2d2d6" font-weight="normal" text-anchor="start" textLength="88.0" lengthAdjust="spacingAndGlyphs" stroke="#d2d2d6" stroke-width="0.22">2021-04-13 12:51:36 BST</text>
<text x="612.00" y="360.20" font-size="8.8" fill="#d2d2d6" font-weight="normal" text-anchor="start" textLength="93.2" lengthAdjust="spacingAndGlyphs" stroke="#d2d2d6" stroke-width="0.22">Activity: BgWriterHibernate</text>
<circle cx="224.5" cy="373.9" r="4.3" fill="#e2452f"/><g stroke="#f4c8c0" stroke-width="1"><line x1="222.7" y1="372.09999999999997" x2="226.3" y2="375.7"/><line x1="226.3" y1="372.09999999999997" x2="222.7" y2="375.7"/></g>
<rect x="235.30" y="370.20" width="7.50" height="7.50" fill="#d4d4dc" rx="0.5"/>
<polygon points="251.4,371.7 254.2,373.9 251.4,376.09999999999997" fill="#e0e0e4"/>
<text x="262.50" y="377.00" font-size="8.8" fill="#d2d2d6" font-weight="normal" text-anchor="start" textLength="21.6" lengthAdjust="spacingAndGlyphs" stroke="#d2d2d6" stroke-width="0.22">60597</text>
<text x="490.00" y="377.00" font-size="8.8" fill="#d2d2d6" font-weight="normal" text-anchor="start" textLength="88.0" lengthAdjust="spacingAndGlyphs" stroke="#d2d2d6" stroke-width="0.22">2021-04-13 12:51:36 BST</text>
<text x="612.00" y="377.00" font-size="8.8" fill="#d2d2d6" font-weight="normal" text-anchor="start" textLength="80.8" lengthAdjust="spacingAndGlyphs" stroke="#d2d2d6" stroke-width="0.22">Activity: WalWriterMain</text>
<circle cx="224.5" cy="390.7" r="4.3" fill="#e2452f"/><g stroke="#f4c8c0" stroke-width="1"><line x1="222.7" y1="388.9" x2="226.3" y2="392.5"/><line x1="226.3" y1="388.9" x2="222.7" y2="392.5"/></g>
<rect x="235.30" y="387.00" width="7.50" height="7.50" fill="#d4d4dc" rx="0.5"/>
<polygon points="251.4,388.5 254.2,390.7 251.4,392.9" fill="#e0e0e4"/>
<text x="262.50" y="393.80" font-size="8.8" fill="#d2d2d6" font-weight="normal" text-anchor="start" textLength="21.6" lengthAdjust="spacingAndGlyphs" stroke="#d2d2d6" stroke-width="0.22">60598</text>
<text x="490.00" y="393.80" font-size="8.8" fill="#d2d2d6" font-weight="normal" text-anchor="start" textLength="88.0" lengthAdjust="spacingAndGlyphs" stroke="#d2d2d6" stroke-width="0.22">2021-04-13 12:51:36 BST</text>
<text x="612.00" y="393.80" font-size="8.8" fill="#d2d2d6" font-weight="normal" text-anchor="start" textLength="91.2" lengthAdjust="spacingAndGlyphs" stroke="#d2d2d6" stroke-width="0.22">Activity: AutoVacuumMain</text>
</svg></body></html>
